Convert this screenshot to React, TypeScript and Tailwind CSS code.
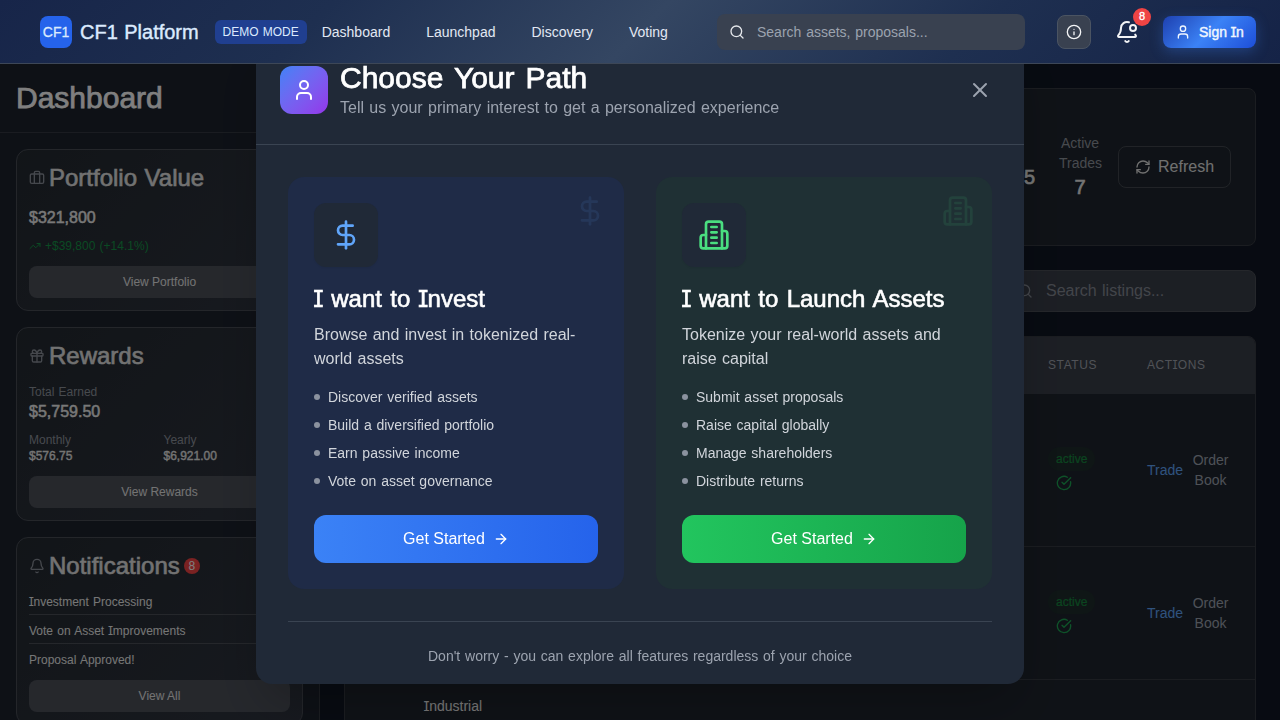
import type { ReactNode } from 'react';
import {
  ArrowRight, Bell, BellDot, Briefcase, CircleCheckBig, DollarSign, Gift, Info, RefreshCw, Search, TrendingUp, User, X,
} from 'lucide-react';

/** Text with a serifed capital I, so that it reads apart from a lowercase l. */
function T({ children }: { children: string }) {
  return (
    <>
      {children.split(/(I)/).map((part, i) =>
        part === 'I' ? (
          <span key={i} className="-ml-[0.03em] -mr-[0.03em] font-['Inter'] text-[0.97em] leading-none [font-feature-settings:'cv08']">I</span>
        ) : (
          part
        ),
      )}
    </>
  );
}

function Building({ className }: { className: string }) {
  return (
    <svg className={className} viewBox="0 0 24 24" fill="none" stroke="currentColor" strokeWidth="2" strokeLinecap="round" strokeLinejoin="round">
      <path d="M6 22V4a2 2 0 0 1 2-2h8a2 2 0 0 1 2 2v18Z" />
      <path d="M6 12H4a2 2 0 0 0-2 2v6a2 2 0 0 0 2 2h2" />
      <path d="M18 9h2a2 2 0 0 1 2 2v9a2 2 0 0 1-2 2h-2" />
      <path d="M10 6h4M10 10h4M10 14h4M10 18h4" />
    </svg>
  );
}

function Header() {
  return (
    <header className="relative z-30 flex h-16 shrink-0 items-center border-b border-[#3d4757] bg-[linear-gradient(135deg,#172549_0%,#1e2f50_25%,#344662_50%,#1e2f50_75%,#152347_100%)] pl-10 pr-6">
      <div className="flex items-center gap-2">
        <div className="flex size-8 items-center justify-center rounded-lg bg-[#2563eb] text-sm text-[#dbeafe] [-webkit-text-stroke:0.02em]">CF1</div>
        <span className="text-xl text-[#dbeafe] [-webkit-text-stroke:0.02em]">CF1 Platform</span>
      </div>
      <span className="ml-4 flex h-6 w-[92px] items-center justify-center rounded-md bg-[#203f90] text-xs text-[#dbeafe]">DEMO MODE</span>
      <nav className="ml-[15px] flex gap-9 text-sm text-[#e2e8f3]">
        {['Dashboard', 'Launchpad', 'Discovery', 'Voting'].map((l) => (
          <a key={l}>{l}</a>
        ))}
      </nav>
      <div className="ml-auto flex h-9 w-[308px] items-center gap-3 rounded-lg bg-[#394150] pl-3 text-sm text-[#9ca3af]">
        <Search className="size-4 text-[#e5e7eb]" />
        <span>Search assets, proposals...</span>
      </div>
      <button className="ml-8 flex size-[34px] items-center justify-center rounded-lg border border-[#4b5462] bg-[#394150]">
        <Info className="size-4 text-[#f3f4f6]" />
      </button>
      <div className="relative ml-6">
        <BellDot className="size-6 text-[#f3f4f6]" />
        <span className="absolute -right-3 -top-3 flex size-[18px] items-center justify-center rounded-full bg-[#ef4444] text-[11px] text-white [-webkit-text-stroke:0.03em]">8</span>
      </div>
      <button className="ml-6 flex h-8 w-[93px] items-center gap-2 rounded-lg bg-[linear-gradient(135deg,#1e40af_0%,#3b82f6_50%,#1d4ed8_100%)] pl-3 text-sm text-[#eff6ff] shadow-[0_4px_14px_rgba(59,130,246,0.3)]">
        <User className="size-4" />
        <span className="[-webkit-text-stroke:0.03em]"><T>Sign In</T></span>
      </button>
    </header>
  );
}

function SideCard({ icon, title, badge, children }: { icon: ReactNode; title: string; badge?: string; children: ReactNode }) {
  return (
    <section className="shrink-0 rounded-xl border border-[#484c55] bg-[linear-gradient(135deg,#242a31,#2f343f)] p-3">
      <div className="mb-3 flex h-8 items-center gap-1 text-[#8b909a]">
        {icon}
        <h2 className="text-2xl text-[#e4e4e4] [-webkit-text-stroke:0.025em]">{title}</h2>
        {badge && <span className="flex size-4 items-center justify-center rounded-full bg-[#f54444] text-xs text-white">{badge}</span>}
      </div>
      {children}
    </section>
  );
}

function SideButton({ children }: { children: string }) {
  return <button className="mt-3 block h-8 w-full rounded-lg bg-[#4c5059] text-xs text-[#e6e6e6]">{children}</button>;
}

function Sidebar() {
  return (
    <aside className="flex w-80 shrink-0 flex-col border-r border-[#363a42] bg-[#1c222d]">
      <div className="border-b border-[#343942] p-4">
        <h1 className="text-3xl text-white [-webkit-text-stroke:0.025em]">Dashboard</h1>
      </div>
      <div className="flex flex-col gap-4 p-4">
        <SideCard icon={<Briefcase className="size-4" />} title="Portfolio Value">
          <div className="text-base text-[#f0f0f0] [-webkit-text-stroke:0.03em]">$321,800</div>
          <div className="mt-2 flex items-center gap-1 text-xs text-[#159447]">
            <TrendingUp className="size-3" />
            +$39,800 (+14.1%)
          </div>
          <SideButton>View Portfolio</SideButton>
        </SideCard>
        <SideCard icon={<Gift className="size-4" />} title="Rewards">
          <div className="text-xs text-[#8f949d]">Total Earned</div>
          <div className="text-base text-[#f0f0f0] [-webkit-text-stroke:0.03em]">$5,759.50</div>
          <div className="mt-2 grid grid-cols-2 gap-2 text-xs text-[#8f949d]">
            <div>Monthly<div className="text-[#e8e8e8] [-webkit-text-stroke:0.03em]">$576.75</div></div>
            <div>Yearly<div className="text-[#e8e8e8] [-webkit-text-stroke:0.03em]">$6,921.00</div></div>
          </div>
          <SideButton>View Rewards</SideButton>
        </SideCard>
        <SideCard icon={<Bell className="size-4" />} title="Notifications" badge="8">
          <div className="flex flex-col gap-2 text-xs text-[#ececec]">
            <div className="border-b border-[#4a4e56] pb-1"><T>Investment Processing</T></div>
            <div className="border-b border-[#4a4e56] pb-1"><T>Vote on Asset Improvements</T></div>
            <div>Proposal Approved!</div>
          </div>
          <SideButton>View All</SideButton>
        </SideCard>
      </div>
    </aside>
  );
}

function Row({ height }: { height: string }) {
  return (
    <div className={`flex items-center border-b border-[#363a42] ${height}`}>
      <div className="ml-auto flex w-[99px] flex-col gap-1 pb-0.5">
        <span className="flex h-6 w-[47px] items-center rounded-full bg-[#1e2c2c] pl-2 text-xs text-[#16883f] [-webkit-text-stroke:0.02em]">active</span>
        <CircleCheckBig className="ml-2 size-4 text-[#1ca552]" />
      </div>
      <div className="flex w-[108px] items-center gap-[9px] text-sm">
        <span className="text-[#60a5fa]">Trade</span>
        <span className="w-[37px] text-center text-[#9ca3af]">Order Book</span>
      </div>
    </div>
  );
}

function Market() {
  return (
    <main className="flex min-w-0 flex-1 flex-col gap-6 bg-[#101724] p-6">
      <section className="flex h-[158px] shrink-0 items-center justify-end rounded-lg border border-[#363a42] bg-[#1f252e] px-6">
        <div className="mr-6 mt-5 text-xl text-[#e8e8e8] [-webkit-text-stroke:0.03em]">5</div>
        <div className="mr-[17px] w-[42px] text-center text-sm text-[#8f949d]">
          Active
          <br />
          Trades
          <div className="text-xl text-[#e8e8e8] [-webkit-text-stroke:0.03em]">7</div>
        </div>
        <button className="flex h-[42px] w-[113px] items-center gap-[7px] rounded-lg border border-[#42474f] pl-4 text-base text-[#e0e0e0]">
          <RefreshCw className="size-4" />
          Refresh
        </button>
      </section>
      <div className="flex h-[42px] w-[251px] shrink-0 items-center gap-[13px] self-end rounded-lg border border-[#4a4e56] bg-[#393e49] pl-[11px] text-base text-[#858a94]">
        <Search className="size-4" />
        Search listings...
      </div>
      <section className="h-[520px] shrink-0 overflow-hidden rounded-lg border border-[#363a42] bg-[#1f252e]">
        <div className="flex h-[57px] items-center bg-[#393e49] pb-0.5 text-xs tracking-wider text-[#a0a5ae]">
          <span className="ml-auto w-[99px]">STATUS</span>
          <span className="w-[108px]"><T>ACTIONS</T></span>
        </div>
        <Row height="h-[153px]" />
        <Row height="h-[133px]" />
        <div className="pl-[79px] pt-4 text-sm text-[#ececec]"><T>Industrial</T></div>
      </section>
    </main>
  );
}

interface PathProps {
  card: string;
  tile: string;
  icon: (className: string) => ReactNode;
  color: string;
  title: string;
  text: string;
  items: string[];
  button: string;
}

function PathCard({ card, tile, icon, color, title, text, items, button }: PathProps) {
  return (
    <div className={`relative rounded-2xl p-[26px] ${card}`}>
      <div className={`absolute right-[18px] top-[18px] opacity-10 ${color}`}>{icon('size-8')}</div>
      <div className={`flex size-16 items-center justify-center rounded-xl shadow-[0_1px_2px_rgba(0,0,0,0.05)] ${tile} ${color}`}>{icon('size-8')}</div>
      <h3 className="mt-4 text-2xl text-white [-webkit-text-stroke:0.025em] [word-spacing:0.07em]"><T>{title}</T></h3>
      <p className="mt-2 text-base text-[#d1d5db]">{text}</p>
      <ul className="mt-4 flex flex-col gap-2 text-sm text-[#d1d5db]">
        {items.map((item) => (
          <li key={item} className="flex items-center gap-2">
            <span className="size-1.5 rounded-full bg-[#8b929f]" />
            {item}
          </li>
        ))}
      </ul>
      <button className={`mt-6 flex h-12 w-full items-center justify-center gap-2 rounded-xl text-base text-white ${button}`}>
        Get Started
        <ArrowRight className="size-4" />
      </button>
    </div>
  );
}

function PathDialog() {
  return (
    <div className="fixed inset-0 z-20 flex items-center justify-center bg-black/50">
      <div className="h-[648px] w-[768px] overflow-hidden rounded-2xl bg-[#202937] shadow-2xl">
        <div className="flex items-center justify-between border-b border-[#3a4452] p-6">
          <div className="flex items-center gap-3">
            <div className="flex size-12 items-center justify-center rounded-xl bg-linear-to-br from-[#3b82f6] to-[#9333ea] text-white">
              <User className="size-6" />
            </div>
            <div>
              <h2 className="text-3xl text-white [-webkit-text-stroke:0.025em] [word-spacing:0.09em]">Choose Your Path</h2>
              <p className="text-base text-[#9ca3af]">Tell us your primary interest to get a personalized experience</p>
            </div>
          </div>
          <button className="p-2 text-[#9ca3af]"><X className="size-6" /></button>
        </div>
        <div className="p-8">
          <div className="grid grid-cols-2 gap-8">
            <PathCard
              card="bg-[#1f2b47]"
              tile="bg-[#202937]"
              color="text-[#60a5fa]"
              icon={(c) => <DollarSign className={c} />}
              title="I want to Invest"
              text="Browse and invest in tokenized real-world assets"
              items={['Discover verified assets', 'Build a diversified portfolio', 'Earn passive income', 'Vote on asset governance']}
              button="bg-[linear-gradient(90deg,#3b82f6,#2563eb)]"
            />
            <PathCard
              card="bg-[#1f3034]"
              tile="bg-[#202937]"
              color="text-[#4ade80]"
              icon={(c) => <Building className={c} />}
              title="I want to Launch Assets"
              text="Tokenize your real-world assets and raise capital"
              items={['Submit asset proposals', 'Raise capital globally', 'Manage shareholders', 'Distribute returns']}
              button="bg-[linear-gradient(90deg,#22c55e,#16a34a)]"
            />
          </div>
          <div className="mt-8 border-t border-[#3a4452] pt-6 text-center text-sm text-[#9ca3af]">
            Don't worry - you can explore all features regardless of your choice
          </div>
        </div>
      </div>
    </div>
  );
}

export default function App() {
  return (
    <div className="flex h-[720px] w-[1280px] flex-col overflow-hidden bg-[#101724] font-['Liberation_Sans',Arial,sans-serif] [word-spacing:0.055em]">
      <Header />
      <div className="flex min-h-0 flex-1">
        <Sidebar />
        <Market />
      </div>
      <PathDialog />
    </div>
  );
}
